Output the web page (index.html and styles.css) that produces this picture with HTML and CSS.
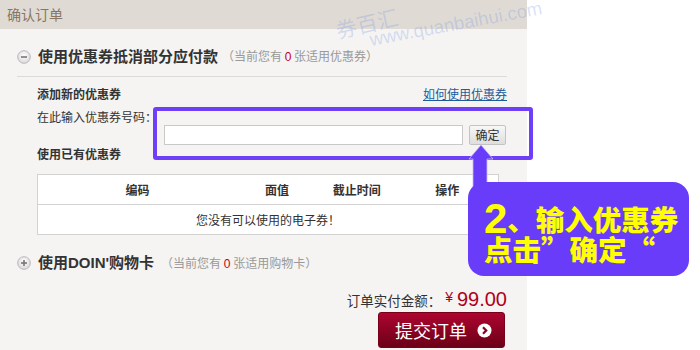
FILE: index.html
```html
<!DOCTYPE html>
<html lang="zh-CN">
<head>
<meta charset="utf-8">
<title>确认订单</title>
<link rel="stylesheet" href="styles.css">
</head>
<body>
<div class="page">
  <div class="panel">
    <div class="panel-head">确认订单</div>

    <div class="section">
      <div class="sec-head sec-head-line">
        <svg class="toggle" width="14" height="14" viewBox="0 0 14 14">
          <defs>
            <radialGradient id="tg1" cx="50%" cy="40%" r="60%">
              <stop offset="0" stop-color="#ffffff"/>
              <stop offset="1" stop-color="#d9d9d9"/>
            </radialGradient>
          </defs>
          <circle cx="7" cy="7" r="6.3" fill="url(#tg1)" stroke="#b9b9b9" stroke-width="1"/>
          <rect x="4" y="6.2" width="6" height="1.6" fill="#777"/>
        </svg>
        <span class="sec-title">使用优惠券抵消部分应付款</span>
        <span class="sec-note">（当前您有 <em>0</em> 张适用优惠券）</span>
      </div>

      <div class="coupon">
        <div class="row-between">
          <span class="bold">添加新的优惠券</span>
          <a class="link" href="#">如何使用优惠券</a>
        </div>
        <div class="label">在此输入优惠券号码：</div>
        <div class="input-row">
          <input class="code-input" type="text">
          <button class="ok-btn" type="button">确定</button>
        </div>
        <div class="bold">使用已有优惠券</div>

        <table class="ctable">
          <thead>
            <tr>
              <th class="c1">编码</th>
              <th class="c2">面值</th>
              <th class="c3">截止时间</th>
              <th class="c4">操作</th>
            </tr>
          </thead>
          <tbody>
            <tr>
              <td colspan="4">您没有可以使用的电子券！</td>
            </tr>
          </tbody>
        </table>
      </div>

      <div class="sec-head sec-head-2">
        <svg class="toggle" width="14" height="14" viewBox="0 0 14 14">
          <defs>
            <radialGradient id="tg2" cx="50%" cy="40%" r="60%">
              <stop offset="0" stop-color="#ffffff"/>
              <stop offset="1" stop-color="#d9d9d9"/>
            </radialGradient>
          </defs>
          <circle cx="7" cy="7" r="6.3" fill="url(#tg2)" stroke="#b9b9b9" stroke-width="1"/>
          <rect x="4" y="6.2" width="6" height="1.6" fill="#777"/>
          <rect x="6.2" y="4" width="1.6" height="6" fill="#777"/>
        </svg>
        <span class="sec-title">使用DOIN'购物卡</span>
        <span class="sec-note note-2">（当前您有 <em>0</em> 张适用购物卡）</span>
      </div>
    </div>

    <div class="total">
      <span class="total-label">订单实付金额：</span><span class="yen">¥</span><span class="amount">99.00</span>
    </div>
    <div class="submit-row">
      <button class="submit" type="button">
        <span>提交订单</span>
        <svg width="15" height="15" viewBox="0 0 15 15">
          <circle cx="7.5" cy="7.5" r="7" fill="#ffffff"/>
          <path d="M6 4.3 L9.2 7.5 L6 10.7" fill="none" stroke="#8a0020" stroke-width="2.2"/>
        </svg>
      </button>
    </div>
  </div>

  <div class="watermark">
    <span class="wm-cn">券百汇</span>
    <span class="wm-url">www.quanbaihui.com</span>
  </div>

  <div class="frame"></div>
  <svg class="arrow" width="32" height="44" viewBox="0 0 32 44">
    <polygon points="16,2 28,16 22,16 22,44 8,44 8,16 4,16" fill="#683cf8" stroke="#c9b8ff" stroke-width="0.8"/>
  </svg>
  <div class="callout">
    <div class="cl-line"><span class="cl-num">2</span>、输入优惠券</div>
    <div class="cl-line">点击”确定“</div>
  </div>
</div>
</body>
</html>
```
FILE: styles.css
```css
* { box-sizing: border-box; }
html, body { margin: 0; padding: 0; background: #ffffff; }
body {
  font-family: "Noto Sans CJK SC", "Liberation Sans", sans-serif;
  font-size: 12px;
  color: #333;
}
.page {
  position: relative;
  width: 700px;
  height: 350px;
  overflow: hidden;
  background: #ffffff;
}
.panel {
  width: 527px;
  height: 350px;
  background: #f5f4f2;
}
.panel-head {
  height: 29px;
  line-height: 29px;
  padding-left: 7px;
  background: #dfdbd4;
  color: #8a7462;
  font-size: 14px;
}
.section {
  margin: 0 20px 0 17px;
}
.sec-head {
  display: flex;
  align-items: center;
  height: 20px;
}
.sec-head-line {
  margin-top: 18px;
  height: 30px;
  padding-bottom: 10px;
  border-bottom: 1px solid #dcdad6;
}
.toggle { flex: none; margin-right: 7px; }
.sec-title {
  font-family: "Liberation Sans", "Noto Sans CJK SC", sans-serif;
  font-weight: bold;
  font-size: 15px;
  color: #333;
  line-height: 20px;
}
.sec-note {
  margin-left: 4px;
  font-size: 12px;
  color: #999;
  line-height: 20px;
}
.sec-note em {
  font-style: normal;
  color: #c0001a;
  font-family: "Liberation Sans", sans-serif;
}
.note-2 { margin-left: 7px; }

.coupon {
  padding-left: 20px;
}
.row-between {
  display: flex;
  justify-content: space-between;
  align-items: center;
  height: 18px;
  line-height: 18px;
  margin-top: 8px;
}
.bold { font-weight: bold; line-height: 18px; height: 18px; }
.link {
  color: #1d5b9b;
  text-decoration: underline;
  line-height: 18px;
}
.label {
  margin-top: 5px;
  line-height: 18px;
  height: 18px;
}
.input-row {
  display: flex;
  align-items: center;
  height: 20px;
  margin-top: -1px;
  padding-left: 127px;
}
.code-input {
  width: 299px;
  height: 20px;
  border: 1px solid #c9c9c9;
  background: #fff;
  margin: 0;
  padding: 0 4px;
}
.ok-btn {
  margin: 0 0 0 6px;
  width: 37px;
  height: 20px;
  padding: 0;
  border: 1px solid #c3c3c3;
  border-radius: 2px;
  background: linear-gradient(#f7f7f7, #dedede);
  font-family: "Noto Sans CJK SC", sans-serif;
  font-size: 12px;
  color: #333;
  line-height: 18px;
}
.ctable {
  margin-top: 11px;
  width: 462px;
  border-collapse: collapse;
  border: 1px solid #d2d2d2;
  background: #fff;
}
.ctable th, .ctable td {
  height: 30px;
  padding: 0;
  text-align: center;
  font-size: 12px;
  color: #333;
}
.ctable th { font-weight: bold; border-bottom: 1px solid #d2d2d2; }
.c1 { width: 200px; }
.c2 { width: 80px; }
.c3 { width: 80px; }
.c4 { width: 102px; }

.sec-head-2 { margin-top: 18px; }

.total {
  margin-top: 12px;
  height: 24px;
  line-height: 24px;
  text-align: right;
  padding-right: 20px;
  white-space: nowrap;
}
.total-label {
  font-size: 13.5px;
  color: #333;
}
.yen {
  font-family: "Liberation Sans", sans-serif;
  font-size: 14px;
  color: #b0001a;
  vertical-align: 4px;
  margin-left: 4px;
  margin-right: 4px;
}
.amount {
  font-family: "Liberation Sans", sans-serif;
  font-size: 20px;
  color: #b0001a;
}
.submit-row {
  display: flex;
  justify-content: flex-end;
  padding-right: 22px;
  margin-top: 3px;
}
.submit {
  display: flex;
  align-items: center;
  justify-content: center;
  gap: 10px;
  width: 127px;
  height: 36px;
  padding: 0 0 0 4px;
  border: 1px solid #7a0019;
  border-radius: 3px;
  background: linear-gradient(#ad0530, #6c0017);
  color: #fff;
  font-family: "Noto Sans CJK SC", sans-serif;
  font-size: 18px;
}

.watermark {
  position: absolute;
  left: 0;
  top: 0;
  width: 700px;
  height: 60px;
  pointer-events: none;
}
.wm-cn {
  position: absolute;
  left: 336px;
  top: 19px;
  font-size: 21px;
  line-height: 22px;
  color: rgba(120, 150, 230, 0.28);
  transform: rotate(-13deg);
  transform-origin: left center;
  white-space: nowrap;
}
.wm-url {
  position: absolute;
  left: 370px;
  top: 29px;
  font-family: "Liberation Sans", sans-serif;
  font-size: 18.5px;
  line-height: 22px;
  color: rgba(120, 150, 230, 0.28);
  transform: rotate(-10.5deg);
  transform-origin: left center;
  white-space: nowrap;
}

.frame {
  position: absolute;
  left: 153px;
  top: 107px;
  width: 380px;
  height: 53px;
  border: 4px solid #6d40f8;
  border-radius: 3px;
}
.arrow {
  position: absolute;
  left: 465px;
  top: 143px;
}
.callout {
  position: absolute;
  left: 468px;
  top: 182px;
  width: 221px;
  height: 94px;
  padding: 22px 0 0 16px;
  border-radius: 16px;
  background: #683cf8;
  color: #ffff00;
  font-family: "Noto Sans CJK SC", sans-serif;
  font-weight: 900;
  font-size: 28.5px;
}
.cl-line {
  height: 30px;
  line-height: 30px;
  white-space: nowrap;
}
.cl-num {
  font-family: "Liberation Sans", sans-serif;
  font-weight: bold;
  font-size: 42px;
  line-height: 30px;
  vertical-align: top;
}
```
